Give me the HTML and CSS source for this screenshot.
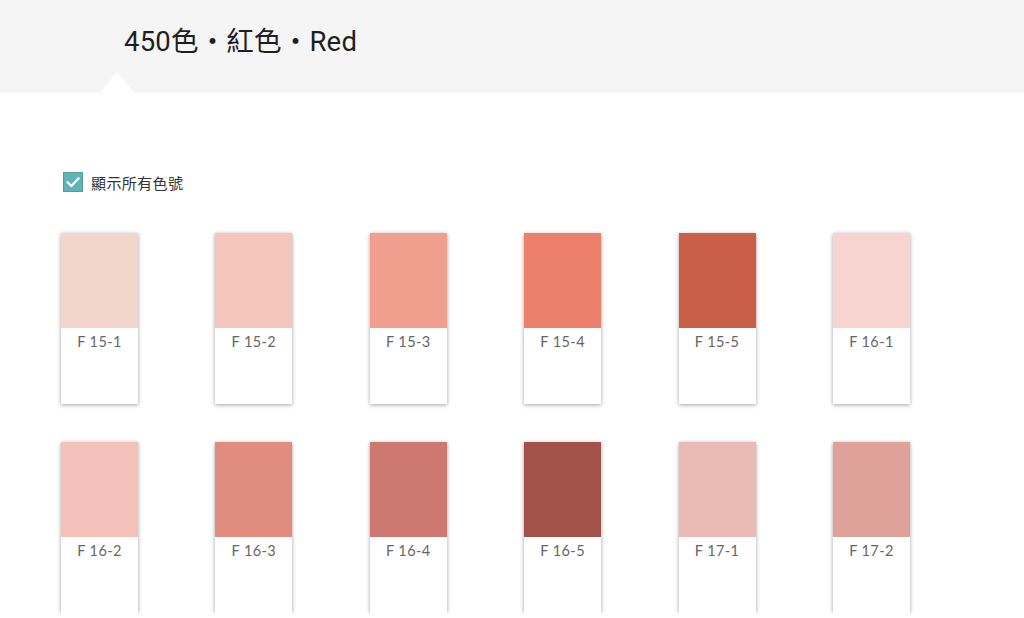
FILE: index.html
```html
<!DOCTYPE html>
<html lang="zh-Hant">
<head>
<meta charset="utf-8">
<title>450色 · 紅色 · Red</title>
<link rel="stylesheet" href="styles.css">
</head>
<body>
<header class="topbar">
  <h1 class="title">450色・紅色・Red</h1>
  <span class="notch"></span>
</header>
<main class="content">
  <label class="toggle">
    <span class="box"><svg viewBox="0 0 20 20" width="20" height="20"><path d="M4.5 10.2 L8.4 14 L15.6 6.2" fill="none" stroke="#fff" stroke-width="2.2" stroke-linecap="round" stroke-linejoin="round"/></svg></span>
    <span class="toggle-text">顯示所有色號</span>
  </label>
  <div class="grid">
    <div class="card"><div class="chip" style="background:#f2d6cc"></div><div class="name">F 15-1</div></div>
    <div class="card"><div class="chip" style="background:#f6c5bb"></div><div class="name">F 15-2</div></div>
    <div class="card"><div class="chip" style="background:#f09e8e"></div><div class="name">F 15-3</div></div>
    <div class="card"><div class="chip" style="background:#ec806d"></div><div class="name">F 15-4</div></div>
    <div class="card"><div class="chip" style="background:#c85f46"></div><div class="name">F 15-5</div></div>
    <div class="card"><div class="chip" style="background:#f7d4cf"></div><div class="name">F 16-1</div></div>
    <div class="card"><div class="chip" style="background:#f3c1b9"></div><div class="name">F 16-2</div></div>
    <div class="card"><div class="chip" style="background:#e08c7f"></div><div class="name">F 16-3</div></div>
    <div class="card"><div class="chip" style="background:#cd7871"></div><div class="name">F 16-4</div></div>
    <div class="card"><div class="chip" style="background:#a25248"></div><div class="name">F 16-5</div></div>
    <div class="card"><div class="chip" style="background:#eabbb5"></div><div class="name">F 17-1</div></div>
    <div class="card"><div class="chip" style="background:#dea29b"></div><div class="name">F 17-2</div></div>
  </div>
</main>
</body>
</html>
```
FILE: styles.css
```css
html, body {
  margin: 0;
  padding: 0;
  background: #ffffff;
}
body {
  font-family: "Open Sans", "Noto Sans CJK TC", sans-serif;
  color: #222;
  overflow: hidden;
}
.topbar {
  position: relative;
  height: 93px;
  background: #f5f5f6;
  box-sizing: border-box;
  padding: 24px 0 0 124px;
}
.title {
  margin: 0;
  font-family: "Roboto", "Noto Sans CJK TC", sans-serif;
  font-weight: 400;
  font-size: 27.5px;
  line-height: 36px;
  color: #1f1f1f;
  letter-spacing: 0.2px;
}
.notch {
  position: absolute;
  left: 100px;
  bottom: 0;
  width: 0;
  height: 0;
  border-left: 17px solid transparent;
  border-right: 17px solid transparent;
  border-bottom: 21px solid #ffffff;
}
.content {
  padding: 79px 0 0 61px;
}
.toggle {
  display: flex;
  align-items: center;
  gap: 8px;
  margin-left: 2px;
  height: 20px;
}
.box {
  display: block;
  width: 20px;
  height: 20px;
  background: #5fb5b5;
  box-shadow: inset 0 0 0 1px #4f9fa0;
}
.box svg { display: block; }
.toggle-text {
  font-family: "Noto Sans CJK TC", sans-serif;
  font-size: 15px;
  letter-spacing: 0.4px;
  color: #333;
}
.grid {
  margin-top: 41px;
  display: grid;
  grid-template-columns: repeat(6, 77px);
  column-gap: 77.4px;
  row-gap: 38px;
}
.card {
  width: 77px;
  height: 171px;
  background: #fff;
  box-shadow: 0 1px 4px rgba(0, 0, 0, 0.38);
}
.chip {
  height: 95px;
}
.name {
  text-align: center;
  font-family: "Lato", "Liberation Sans", sans-serif;
  font-weight: 400;
  font-size: 14.5px;
  color: #666;
  padding-top: 5px;
  letter-spacing: 0.4px;
}
```
